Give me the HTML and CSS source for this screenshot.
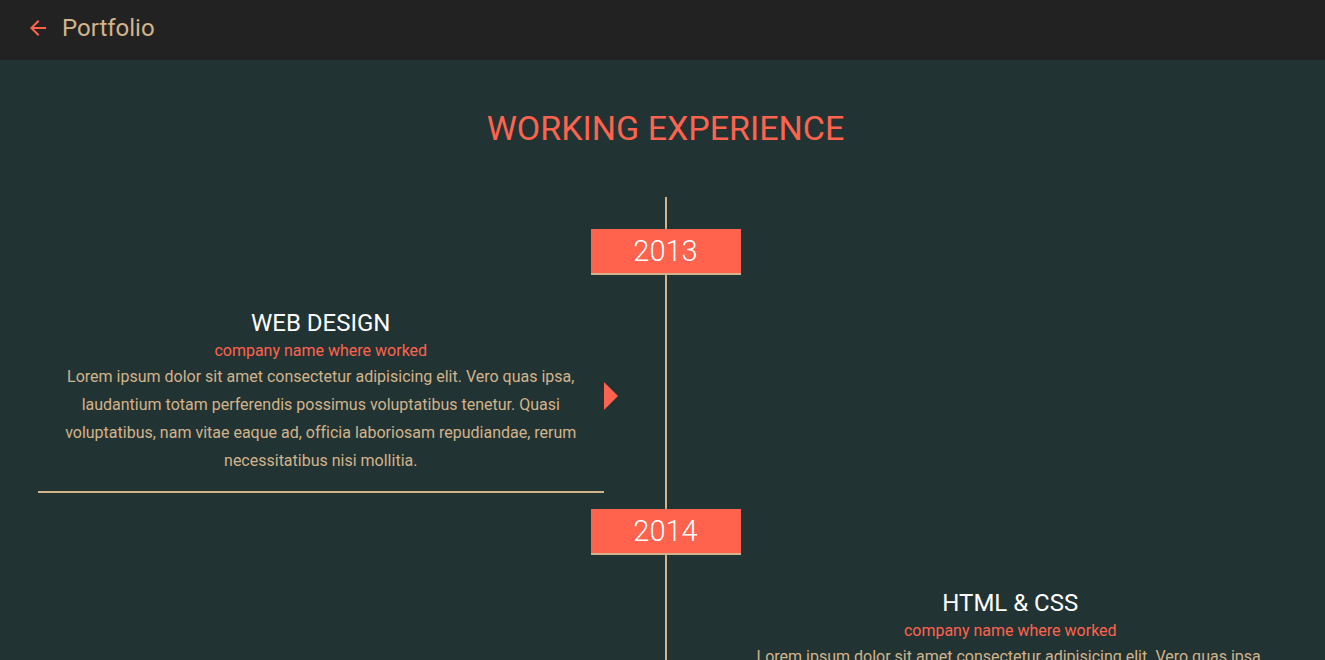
FILE: index.html
```html
<!DOCTYPE html>
<html lang="en">
<head>
<meta charset="utf-8">
<meta name="viewport" content="width=device-width, initial-scale=1">
<title>Portfolio</title>
<link rel="stylesheet" href="styles.css">
</head>
<body>
<header class="topbar">
  <a class="back" href="#" aria-label="Back">
    <svg class="back-icon" viewBox="0 0 24 24" aria-hidden="true"><path d="M20 11H7.83l5.59-5.59L12 4l-8 8 8 8 1.41-1.41L7.83 13H20v-2z"/></svg>
  </a>
  <span class="brand">Portfolio</span>
</header>
<main class="experience">
  <h1 class="title">Working Experience</h1>
  <div class="timeline">
    <h2 class="year">2013</h2>
    <article class="job job-left">
      <h3 class="role">WEB DESIGN</h3>
      <p class="company">company name where worked</p>
      <p class="text">Lorem ipsum dolor sit amet consectetur adipisicing elit. Vero quas ipsa, laudantium totam perferendis possimus voluptatibus tenetur. Quasi voluptatibus, nam vitae eaque ad, officia laboriosam repudiandae, rerum necessitatibus nisi mollitia.</p>
    </article>
    <h2 class="year">2014</h2>
    <article class="job job-right">
      <h3 class="role">HTML &amp; CSS</h3>
      <p class="company">company name where worked</p>
      <p class="text">Lorem ipsum dolor sit amet consectetur adipisicing elit. Vero quas ipsa, laudantium totam perferendis possimus voluptatibus tenetur. Quasi voluptatibus, nam vitae eaque ad, officia laboriosam repudiandae, rerum necessitatibus nisi mollitia.</p>
    </article>
  </div>
</main>
</body>
</html>
```
FILE: styles.css
```css
:root {
  --accent: #ff634d;
}

* {
  box-sizing: border-box;
  margin: 0;
  padding: 0;
}

html {
  scrollbar-width: none;
}

body {
  background: #233;
  color: tan;
  font-family: Roboto, sans-serif;
  font-size: 16px;
  font-variant-ligatures: none;
}

.topbar {
  display: flex;
  align-items: center;
  gap: 12px;
  padding: 12px 26px 16px;
  background: #222;
}

.back {
  display: flex;
  color: var(--accent);
}

.back-icon {
  width: 24px;
  height: 24px;
  fill: currentColor;
}

.brand {
  font-size: 24px;
  line-height: 32px;
}

.experience {
  padding: 48px 32px 48px 38px;
}

.title {
  color: var(--accent);
  font-size: 34px;
  font-weight: 400;
  line-height: 40px;
  text-align: center;
  text-transform: uppercase;
}

.timeline {
  position: relative;
  display: grid;
  grid-template-columns: minmax(0, 1fr) minmax(0, 1fr);
  column-gap: 124px;
  margin-top: 49px;
  padding-top: 32px;
}

.timeline::before {
  content: "";
  position: absolute;
  top: 0;
  bottom: 0;
  left: calc(50% - 1px);
  width: 2px;
  background: tan;
}

.year {
  position: relative;
  grid-column: 1 / -1;
  justify-self: center;
  width: 150px;
  border-bottom: 2px solid tan;
  background: var(--accent);
  color: #fff;
  font-size: 29px;
  font-weight: 300;
  line-height: 44px;
  text-align: center;
}

.job {
  position: relative;
  margin-bottom: 16px;
  padding: 32px 20px 16px;
  border-bottom: 2px solid tan;
  text-align: center;
}

.job::after {
  content: "";
  position: absolute;
  top: 107px;
  border: 14px solid transparent;
}

.job-left {
  grid-column: 1;
}

.job-left::after {
  left: 100%;
  border-left-color: var(--accent);
}

.job-right {
  grid-column: 2;
}

.job-right::after {
  right: 100%;
  border-right-color: var(--accent);
}

.role {
  color: #fff;
  font-size: 24px;
  font-weight: 400;
  line-height: 32px;
}

.company {
  color: var(--accent);
  line-height: 24px;
}

.text {
  line-height: 28px;
}
```
